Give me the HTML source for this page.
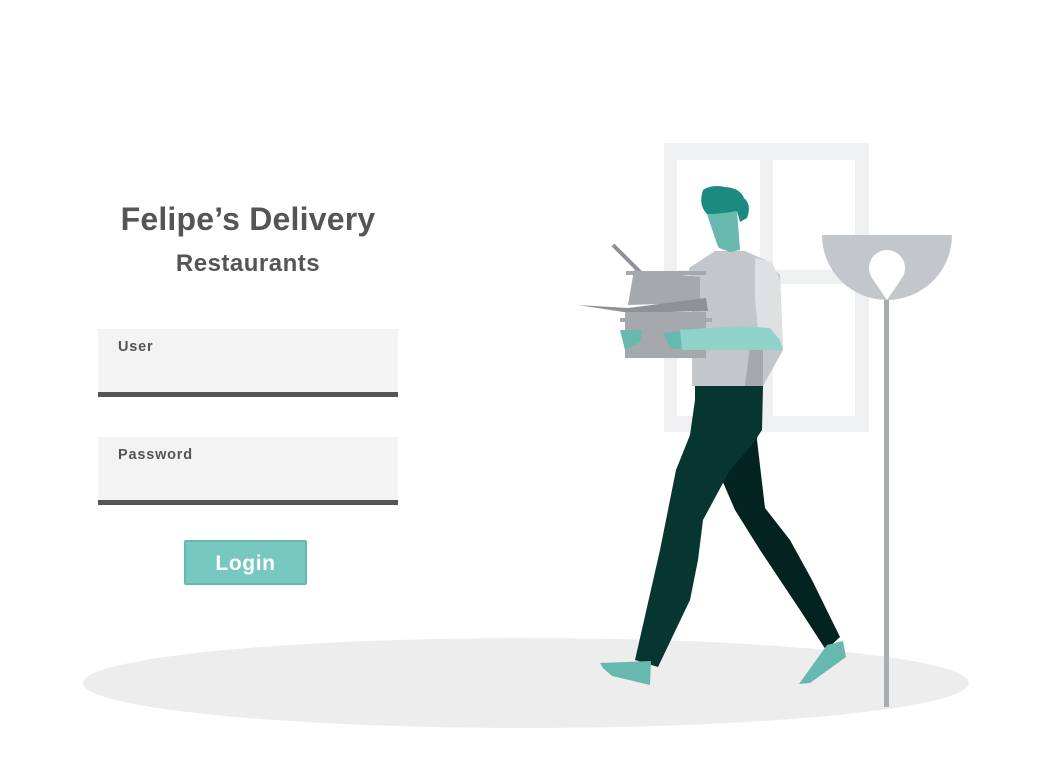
<!DOCTYPE html>
<html><head><meta charset="utf-8"><style>
html,body{margin:0;padding:0;background:#fff;width:1052px;height:778px;overflow:hidden;font-family:"Liberation Sans",sans-serif;}
.t1{position:absolute;left:98px;width:300px;top:201px;text-align:center;font-size:32px;font-weight:bold;color:#555;letter-spacing:0.2px;}
.t2{position:absolute;left:98px;width:300px;top:250px;text-align:center;font-size:24px;font-weight:bold;color:#555;letter-spacing:0.5px;}
.f{position:absolute;left:98px;width:300px;height:63px;background:#f3f3f3;border-bottom:5px solid #555;}
.f span{position:absolute;left:20px;top:10px;font-size:14.5px;font-weight:bold;color:#555;letter-spacing:0.8px;}
.btn{position:absolute;left:184px;top:540px;width:119px;height:41px;background:#77c8c0;border:2px solid #66b8ae;border-radius:2px;color:#fff;font-weight:bold;font-size:21px;text-align:center;line-height:43px;letter-spacing:0.6px;}
svg{position:absolute;left:0;top:0;}
</style></head><body>
<svg width="1052" height="778" viewBox="0 0 1052 778">
<ellipse cx="526" cy="683" rx="443" ry="45" fill="#ededed"/>
<rect x="664" y="143" width="205" height="289" fill="#eff0f2"/>
<rect x="677" y="160" width="83" height="110" fill="#fff"/>
<rect x="773" y="160" width="82" height="110" fill="#fff"/>
<rect x="677" y="284" width="83" height="132" fill="#fff"/>
<rect x="773" y="284" width="82" height="132" fill="#fff"/>
<path d="M822 235 H952 A65 65 0 0 1 822 235Z" fill="#c3c6cb"/>
<path d="M887 300 L872 278 A18 18 0 1 1 902 278 Z" fill="#fff"/>
<rect x="884" y="300" width="5" height="407" fill="#a8abb0"/>
<path d="M700 386 L762 386 L757 440 L765 508 L790 540 L812 580 L840 637 L826 650 L800 610 L760 550 L735 510 L722 480 L716 470Z" fill="#02231f"/>
<path d="M695 386 L763 386 L762 430 L752 445 L730 470 L703 520 L698 560 L690 600 L658 667 L635 660 L660 550 L668 510 L676 470 L690 435 L695 400Z" fill="#073631"/>
<path d="M600 663 L651 661 L650 685 L612 676 L603 668Z" fill="#67b8ae"/>
<path d="M827 645 L843 641 L846 657 L810 683 L799 684Z" fill="#67b8ae"/>
<path d="M689 268 L715 251 L745 251 L765 260 L780 275 L783 350 L763 386 L692 386 L692 300Z" fill="#c3c6cb"/>
<path d="M752 330 L763 330 L763 386 L745 386Z" fill="#a5a8ad"/>
<path d="M755 258 L772 262 L780 280 L783 350 L760 350 L755 300Z" fill="#dfe0e3"/>
<path d="M707 214 L737 211 L740 250 L730 252 L719 248 L717 244 Z" fill="#67b8ae"/>
<path d="M703 190 Q712 184 725 187 Q740 188 744 198 Q752 205 747 218 L740 222 L737 211 Q720 214 707 214 Q698 205 703 190Z" fill="#1b8a80"/>
<line x1="613" y1="245" x2="640" y2="272" stroke="#8e9196" stroke-width="4"/>
<path d="M634 270 L700 277 L700 303 L628 305Z" fill="#a5a8ad"/>
<rect x="626" y="271" width="80" height="4" fill="#a5a8ad"/>
<path d="M578 305 L628 308 L706 298 L708 311 L630 313Z" fill="#8e9196"/>
<rect x="625" y="312" width="81" height="46" fill="#a5a8ad"/>
<rect x="620" y="318" width="92" height="4" fill="#a5a8ad"/>
<path d="M620 330 L642 330 L640 342 L625 350Z" fill="#67b8ae"/>
<path d="M663 333 L690 330 L692 350 L670 348Z" fill="#67b8ae"/>
<path d="M680 330 L740 326 L770 328 L780 340 L783 350 L682 350Z" fill="#8fd3cb"/>
</svg>
<div class="t1">Felipe’s Delivery</div>
<div class="t2">Restaurants</div>
<div class="f" style="top:329px"><span>User</span></div>
<div class="f" style="top:437px"><span>Password</span></div>
<div class="btn">Login</div>
</body></html>
